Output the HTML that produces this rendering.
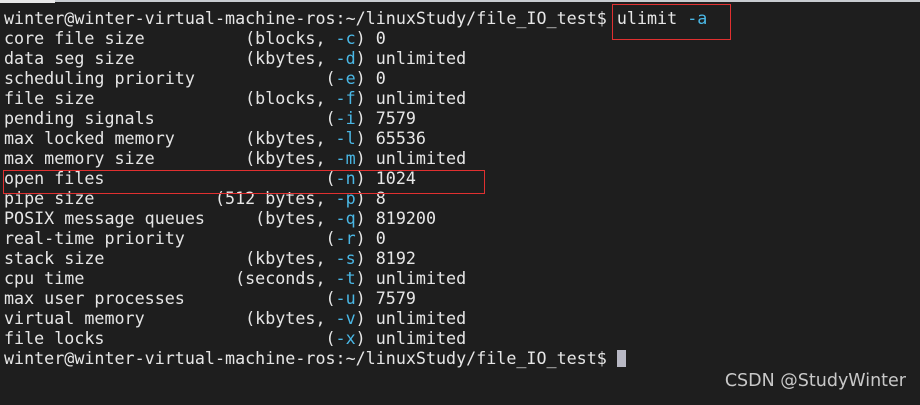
<!DOCTYPE html>
<html><head><style>
body{margin:0;width:920px;height:405px;background:#1e1e1e;overflow:hidden;position:relative}
.t{position:absolute;left:4px;top:8px;font-family:"DejaVu Sans Mono","Liberation Mono",monospace;font-size:16.7px;line-height:20px;color:#e6e6e6;white-space:pre}
.c{color:#4ab8e6}
.box{position:absolute;border:1px solid #e03030}
.cur{display:inline-block;width:9px;height:17px;background:#b8b8c4;vertical-align:-3px}
.wm{position:absolute;right:14px;top:371px;font-family:"DejaVu Sans","Liberation Sans",sans-serif;font-size:17.5px;color:#c8c8c8}
.top{position:absolute;left:0;top:0;width:920px;height:2px;background:#c8ccd0}
.tl{position:absolute;left:0;top:0;width:55px;height:3px;background:#e8e8e8}
</style></head><body>
<div class="top"></div><div class="tl"></div>
<div class="t">winter@winter-virtual-machine-ros:~/linuxStudy/file_IO_test$ ulimit <span class="c">-a</span>
core file size          (blocks, <span class="c">-c</span>) 0
data seg size           (kbytes, <span class="c">-d</span>) unlimited
scheduling priority             (<span class="c">-e</span>) 0
file size               (blocks, <span class="c">-f</span>) unlimited
pending signals                 (<span class="c">-i</span>) 7579
max locked memory       (kbytes, <span class="c">-l</span>) 65536
max memory size         (kbytes, <span class="c">-m</span>) unlimited
open files                      (<span class="c">-n</span>) 1024
pipe size            (512 bytes, <span class="c">-p</span>) 8
POSIX message queues     (bytes, <span class="c">-q</span>) 819200
real-time priority              (<span class="c">-r</span>) 0
stack size              (kbytes, <span class="c">-s</span>) 8192
cpu time               (seconds, <span class="c">-t</span>) unlimited
max user processes              (<span class="c">-u</span>) 7579
virtual memory          (kbytes, <span class="c">-v</span>) unlimited
file locks                      (<span class="c">-x</span>) unlimited
winter@winter-virtual-machine-ros:~/linuxStudy/file_IO_test$ <span class="cur"></span></div>
<div class="box" style="left:612px;top:4px;width:117px;height:34px"></div>
<div class="box" style="left:3px;top:170px;width:480px;height:22px"></div>
<div class="wm">CSDN @StudyWinter</div>
</body></html>
